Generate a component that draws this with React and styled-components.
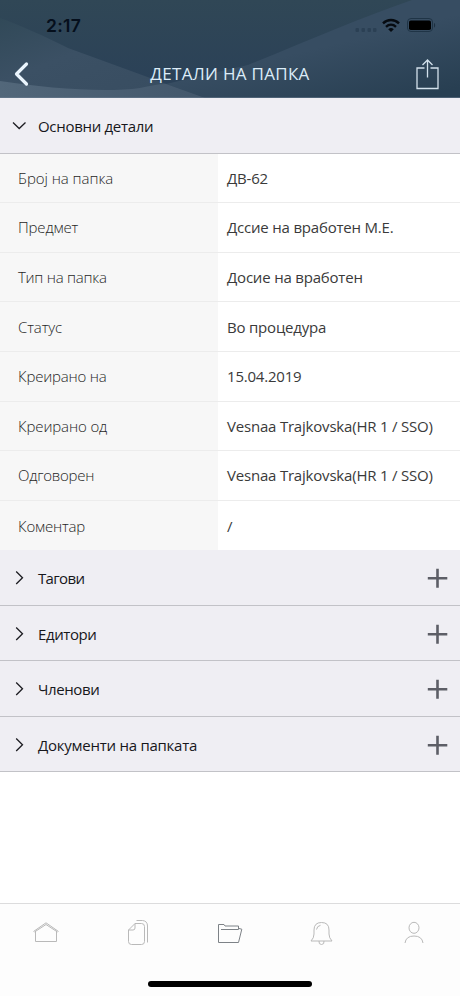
import { useState } from "react";
import styled, { createGlobalStyle } from "styled-components";

const GlobalStyle = createGlobalStyle`
    * {
        box-sizing: border-box;
    }
    body {
        margin: 0;
        background-color: #fff;
        font-family: "Open Sans", "Noto Sans", sans-serif;
    }
    button {
        font-family: inherit;
        border: none;
        background: none;
        padding: 0;
        cursor: pointer;
    }
`

const Screen = styled.div`
    width: 460px;
    height: 996px;
    display: flex;
    flex-direction: column;
    background-color: #fff;
    overflow: hidden;
`

// ------------------------------------------------------------------------header
const HeaderWrap = styled.header`
    position: relative;
    height: 98px;
    flex: none;
    display: flex;
    flex-direction: column;
    background-color: #2e4557;
`
const HeaderBg = styled.svg`
    position: absolute;
    inset: 0;
`
const StatusBar = styled.div`
    position: relative;
    height: 50px;
    display: flex;
    justify-content: space-between;
    padding: 15px 24px 0 46px;
`
const Time = styled.div`
    font-family: Inter, "Liberation Sans", sans-serif;
    font-size: 17.5px;
    font-weight: 600;
    line-height: 21px;
    letter-spacing: 0.3px;
    color: #050f1c;
`
const TitleBar = styled.div`
    position: relative;
    flex: 1;
    display: grid;
    grid-template-columns: 60px 1fr 60px;
    align-items: center;
`
const Title = styled.h1`
    margin: 0;
    text-align: center;
    font-size: 17px;
    font-weight: 400;
    line-height: 24px;
    letter-spacing: 0.3px;
    color: #dcecf8;
    white-space: nowrap;
`
const IconButton = styled.button`
    display: flex;
    height: 48px;
    align-items: center;
    justify-content: ${(props) => (props.$end ? "flex-end" : "flex-start")};
    padding: ${(props) => (props.$end ? "0 21px 0 0" : "0 0 0 13px")};
`

// ------------------------------------------------------------------------section
const SectionHead = styled.div`
    display: flex;
    align-items: center;
    flex: none;
    height: 55.55px;
    padding: 0 12px;
    background-color: #efeef3;
    border-bottom: 1px solid #c2c2c7;
`
const Toggle = styled.button`
    flex: 1;
    display: flex;
    align-items: center;
    gap: 11px;
    height: 100%;
`
const SectionName = styled.span`
    font-size: 15px;
    line-height: 22px;
    letter-spacing: ${(props) => props.$track}px;
    color: #17171b;
    padding-top: 1px;
`
const AddButton = styled.button`
    display: flex;
`

// ------------------------------------------------------------------------details
const DetailList = styled.dl`
    margin: 0;
    flex: none;
`
const DetailRow = styled.div`
    display: grid;
    grid-template-columns: 218px 1fr;
    height: 49.6px;
    border-bottom: 1px solid #ececec;

    &:last-child {
        border-bottom: none;
    }
`
const DetailLabel = styled.dt`
    display: flex;
    align-items: center;
    padding-left: 18px;
    background-color: #f7f7f7;
    font-size: 15px;
    font-weight: 300;
    letter-spacing: ${(props) => props.$track}px;
    color: #262626;
`
const DetailValue = styled.dd`
    display: flex;
    align-items: center;
    margin: 0;
    padding-left: 9px;
    font-size: 15px;
    letter-spacing: -0.2px;
    color: #3a3a3a;
    white-space: nowrap;
`

// ------------------------------------------------------------------------tab bar
const TabBar = styled.nav`
    margin-top: auto;
    height: 93px;
    flex: none;
    display: flex;
    flex-direction: column;
    align-items: center;
    justify-content: space-between;
    border-top: 1px solid #dcdcdd;
    background-color: #fdfdfd;
`
const Tabs = styled.div`
    width: 100%;
    height: 58px;
    display: grid;
    grid-template-columns: repeat(5, 1fr);
`
const Tab = styled.button`
    display: flex;
    align-items: center;
    justify-content: center;
    color: ${(props) => (props.$active ? "#7d8287" : "#b9b9b9")};
`
const HomeIndicator = styled.div`
    width: 164px;
    height: 6px;
    margin-bottom: 9px;
    border-radius: 3px;
    background-color: #000;
`

const details = [
    { label: "Број на папка", value: "ДВ-62", track: -0.05 },
    { label: "Предмет", value: "Дссие на вработен М.Е.", track: -0.15 },
    { label: "Тип на папка", value: "Досие на вработен", track: -0.25 },
    { label: "Статус", value: "Во процедура", track: -0.1 },
    { label: "Креирано на", value: "15.04.2019", track: -0.18 },
    { label: "Креирано од", value: "Vesnaa Trajkovska(HR 1 / SSO)", track: -0.12 },
    { label: "Одговорен", value: "Vesnaa Trajkovska(HR 1 / SSO)", track: -0.25 },
    { label: "Коментар", value: "/", track: -0.18 },
]

const sections = [
    { name: "Тагови", track: -0.65 },
    { name: "Едитори", track: -0.4 },
    { name: "Членови", track: -0.4 },
    { name: "Документи на папката", track: -0.25 },
]

const Backdrop = () => (
    <HeaderBg width="460" height="98" viewBox="0 0 460 98">
        <defs>
            <linearGradient id="base" x1="0" y1="0" x2="0" y2="1">
                <stop offset="0" stopColor="#304756" />
                <stop offset="1" stopColor="#2a4058" />
            </linearGradient>
            <linearGradient id="left" x1="0" y1="0" x2="1" y2="1">
                <stop offset="0" stopColor="#314958" />
                <stop offset="0.4" stopColor="#3b5064" />
                <stop offset="1" stopColor="#374c60" />
            </linearGradient>
            <linearGradient id="wave" x1="0" y1="0" x2="1" y2="0">
                <stop offset="0" stopColor="#52677a" />
                <stop offset="1" stopColor="#43576b" />
            </linearGradient>
            <linearGradient id="right" x1="0.2" y1="0.1" x2="0.85" y2="1">
                <stop offset="0" stopColor="#374d62" />
                <stop offset="0.45" stopColor="#374d62" />
                <stop offset="1" stopColor="#283f52" />
            </linearGradient>
        </defs>
        <rect width="460" height="98" fill="url(#base)" />
        <path d="M166 84L248 65C310 40 360 18 412 0H460V98H205Z" fill="url(#right)" />
        <path d="M0 18C20 25 44 36 68 48L205 98H0Z" fill="url(#left)" />
        <path d="M0 81C45 88 105 93 140 88C150 86 158 84 166 84L205 98H0Z" fill="url(#wave)" />
        <rect y="97" width="460" height="1" fill="#6d7f93" opacity="0.5" />
    </HeaderBg>
)

const StatusIcons = () => (
    <svg width="82" height="20" viewBox="354 15 82 20">
        <g fill="#2b4054">
            <rect x="355.5" y="28" width="3.5" height="4" rx="1" />
            <rect x="361.5" y="28" width="3.5" height="4" rx="1" />
            <rect x="367.5" y="28" width="3.5" height="4" rx="1" />
            <rect x="373" y="28" width="3.5" height="4" rx="1" />
        </g>
        <g fill="none" stroke="#060b11" strokeWidth="2.4">
            <path d="M383 23.4C387.6 18.9 394.4 18.9 399 23.4" />
            <path d="M386 26.8C389 24.1 393 24.1 396 26.8" />
        </g>
        <path d="M388.2 29.2Q391 27 393.8 29.2L391 32Z" fill="#060b11" />
        <rect x="407.5" y="18.5" width="25" height="13" rx="3.5" fill="none" stroke="#1f3446" />
        <rect x="409" y="20.5" width="22" height="9.5" rx="1.8" fill="#000" />
        <path d="M434 23V27.5C435.5 27 435.5 23.5 434 23Z" fill="#1c2f40" />
    </svg>
)

const BackIcon = () => (
    <svg width="17" height="26" viewBox="0 0 17 26" fill="none" stroke="#eaf5fd" strokeWidth="3.2" strokeLinecap="round" strokeLinejoin="round">
        <path d="M13.5 3L3.5 13L13.5 23" />
    </svg>
)

const ShareIcon = () => (
    <svg width="24" height="32" viewBox="0 0 24 32" fill="none" stroke="#d3e1ec" strokeWidth="1.3">
        <path d="M9.5 10H2V30.5H23V10H15.5" />
        <path d="M12.5 19.5V2M7.5 7L12.5 2L17.5 7" />
    </svg>
)

const Chevron = ({ open }) => (
    <svg width="15" height="15" viewBox="0 0 15 15" fill="none" stroke="#1d1d22" strokeWidth="1.3">
        {open ? <path d="M1 4.5L7.2 10.5L13.5 4.5" /> : <path d="M4.2 1.5L10.5 7.7L4.2 14" />}
    </svg>
)

const PlusIcon = () => (
    <svg width="21" height="21" viewBox="0 0 21 21" fill="none" stroke="#5d5e66" strokeWidth="2.6">
        <path d="M0.8 11.2H20.3M10.5 1.7V20.7" />
    </svg>
)

const tabIcons = {
    home: (
        <>
            <path d="M5.5 12V22.5H26.5V12" />
            <path d="M3.5 12.5L16 3.8L28.5 12.5" />
            <path d="M4.5 13L16 5.5L27.5 13" />
        </>
    ),
    files: (
        <>
            <path d="M13 4.5H19.5Q22.5 4.5 22.5 7.5V22.5Q22.5 25.5 19.5 25.5H9.5Q6.5 25.5 6.5 22.5V11L13 4.5V9Q13 11 11 11H6.500" />
            <path d="M14.5 1.5H20.5Q25.5 2 25.5 7V23.5" />
        </>
    ),
    folder: (
        <>
            <path d="M7 10.5H24.5V7H11L10 5.5H4.5V23.5H24.5L27.8 10.2L25 9.5" />
        </>
    ),
    bell: (
        <>
            <path d="M5 22Q8 19 8 15V11Q8 3.5 15.5 3.5T23 11V15Q23 19 26 22Z" />
            <path d="M13 22Q12.5 25.5 15.5 25.5T18 22M10.5 10.5Q11 7 14.5 6.3" />
        </>
    ),
    user: (
        <>
            <ellipse cx="16" cy="8.8" rx="5" ry="5.5" />
            <path d="M7 24Q8 17 16 17T25 24" />
        </>
    ),
}

const TabIcon = ({ name }) => (
    <svg width="32" height="28" viewBox="0 0 32 28" fill="none" stroke="currentColor" strokeWidth="1">
        {tabIcons[name]}
    </svg>
)

const Section = ({ name, track, main, open, onToggle }) => (
    <SectionHead>
        <Toggle onClick={onToggle}>
            <Chevron open={open} />
            <SectionName $track={track}>{name}</SectionName>
        </Toggle>
        {!main && (
            <AddButton>
                <PlusIcon />
            </AddButton>
        )}
    </SectionHead>
)

export default function App() {
    const [open, setOpen] = useState(true)
    const [tab, setTab] = useState("folder")

    return (
        <Screen>
            <GlobalStyle />
            <HeaderWrap>
                <Backdrop />
                <StatusBar>
                    <Time>2:17</Time>
                    <StatusIcons />
                </StatusBar>
                <TitleBar>
                    <IconButton>
                        <BackIcon />
                    </IconButton>
                    <Title>ДЕТАЛИ НА ПАПКА</Title>
                    <IconButton $end>
                        <ShareIcon />
                    </IconButton>
                </TitleBar>
            </HeaderWrap>

            <Section main name="Основни детали" track={-0.3} open={open} onToggle={() => setOpen(!open)} />
            {open && (
                <DetailList>
                    {details.map((item) => (
                        <DetailRow key={item.label}>
                            <DetailLabel $track={item.track}>{item.label}</DetailLabel>
                            <DetailValue>{item.value}</DetailValue>
                        </DetailRow>
                    ))}
                </DetailList>
            )}
            {sections.map((item) => (
                <Section key={item.name} name={item.name} track={item.track} />
            ))}

            <TabBar>
                <Tabs>
                    {Object.keys(tabIcons).map((name) => (
                        <Tab key={name} $active={tab === name} onClick={() => setTab(name)}>
                            <TabIcon name={name} />
                        </Tab>
                    ))}
                </Tabs>
                <HomeIndicator />
            </TabBar>
        </Screen>
    )
}
